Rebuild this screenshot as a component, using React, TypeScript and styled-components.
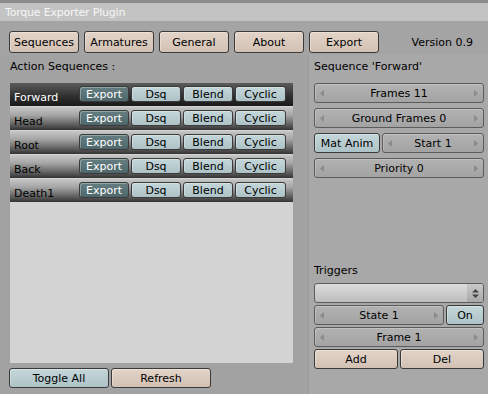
import React from "react";
import styled, { createGlobalStyle, css } from "styled-components";

type Tone = "beige" | "blue" | "teal";

interface ButtonInterface {
  $tone: Tone;
  $w?: number;
  $grow?: boolean;
  $h?: number;
}

interface RowInterface {
  $selected?: boolean;
}

const GlobalStyle = createGlobalStyle`
  html, body {
    margin: 0;
    padding: 0;
    background: #a4a4a4;
  }
  body {
    font-family: "DejaVu Sans", "Bitstream Vera Sans", sans-serif;
    font-size: 11px;
    color: #000;
  }
`;

const tones = {
  beige: css`
    background: linear-gradient(#e3d4c8, #d2c1b3);
    color: #000;
  `,
  blue: css`
    background: linear-gradient(#c4d6da, #aec3c7);
    color: #000;
  `,
  teal: css`
    background: linear-gradient(#647e82, #4f676b);
    color: #fff;
  `,
};

const ButtonStyled = styled.div<ButtonInterface>`
  box-sizing: border-box;
  width: ${({ $w }) => ($w ? `${$w}px` : "auto")};
  flex: ${({ $grow }) => ($grow ? "1 1 0" : "0 0 auto")};
  height: ${({ $h }) => $h ?? 20}px;
  display: flex;
  align-items: center;
  justify-content: center;
  border: 1px solid #3a3a3a;
  border-radius: 3px;
  box-shadow: inset 1px 1px 0 rgba(255, 255, 255, 0.3);
  white-space: nowrap;
  ${({ $tone }) => tones[$tone]}
`;

const AppStyled = styled.div`
  width: 488px;
  height: 394px;
  display: flex;
  flex-direction: column;
  background: #a4a4a4;
  overflow: hidden;
`;

const TitleBar = styled.div`
  height: 19px;
  border-top: 3px solid #8b8b8b;
  background: #c3c3c3;
  color: #f6f6f6;
  padding-left: 5px;
  display: flex;
  align-items: center;
  letter-spacing: -0.2px;
`;

const Toolbar = styled.div`
  display: flex;
  align-items: center;
  gap: 5px;
  padding: 10px 15px 0 9px;
`;

const Version = styled.span`
  margin-left: auto;
`;

const Columns = styled.div`
  flex: 1;
  display: flex;
  margin-top: 2px;
`;

const LeftColumn = styled.div`
  width: 308px;
  display: flex;
  flex-direction: column;
  padding: 4px 0 6px 10px;
  box-sizing: border-box;
  background: #a2a2a2;
`;

const RightColumn = styled.div`
  flex: 1;
  display: flex;
  flex-direction: column;
  padding: 4px 4px 25px 6px;
  background: #a8a8a8;
  box-shadow: inset 1px 0 0 #9a9a9a;
`;

const Heading = styled.div`
  height: 16px;
  line-height: 16px;
  margin-bottom: 8px;
`;

const List = styled.div`
  width: 283px;
  height: 280px;
  background: #d3d3d3;
  display: flex;
  flex-direction: column;
  gap: 1px;
`;

const RowStyled = styled.div<RowInterface>`
  height: 23px;
  display: flex;
  align-items: flex-start;
  background: ${({ $selected }) =>
    $selected
      ? "linear-gradient(#5c5c5c, #2e2e2e 60%, #1a1a1a)"
      : "linear-gradient(#c6c6c6, #a6a6a6 35%, #6a6a6a 70%, #333 100%)"};
  color: ${({ $selected }) => ($selected ? "#fff" : "#000")};
`;

const RowLabel = styled.div`
  box-sizing: border-box;
  width: 69px;
  padding: 8px 0 0 4px;
  line-height: 14px;
`;

const RowButtons = styled.div`
  display: flex;
  gap: 2px;
  margin-top: 3px;
`;

const BottomBar = styled.div`
  display: flex;
  gap: 2px;
  margin: 5px 0 0 -1px;
`;

const Stack = styled.div<{ $gap: number }>`
  display: flex;
  flex-direction: column;
  gap: ${({ $gap }) => $gap}px;
`;

const Line = styled.div`
  display: flex;
  gap: 2px;
`;

const Spacer = styled.div`
  flex: 1;
`;

const TriggerHeading = styled(Heading)`
  margin-bottom: 4px;
`;

const NumFieldStyled = styled.div`
  flex: 1 1 0;
  box-sizing: border-box;
  height: 20px;
  display: flex;
  align-items: center;
  padding: 0 5px;
  border: 1px solid #5c5c5c;
  border-radius: 3px;
  background: linear-gradient(#b2b2b2, #a3a3a3);
  box-shadow: inset 1px 1px 0 rgba(255, 255, 255, 0.2);
`;

const NumText = styled.span`
  flex: 1;
  text-align: center;
`;

const Dropdown = styled.div`
  box-sizing: border-box;
  height: 20px;
  display: flex;
  border: 1px solid #5c5c5c;
  border-radius: 3px;
  background: linear-gradient(#dcdcdc, #bdbdbd);
  overflow: hidden;
`;

const DropdownArrow = styled.div`
  margin-left: auto;
  width: 16px;
  display: flex;
  align-items: center;
  justify-content: center;
  background: linear-gradient(#c8c8c8, #a9a9a9);
`;

const Arrow = ({ dir }: { dir: "l" | "r" }) => (
  <svg width="4" height="7" viewBox="0 0 4 7">
    <path d={dir === "l" ? "M4 0 L0 3.5 L4 7 Z" : "M0 0 L4 3.5 L0 7 Z"} fill="#8a8a8a" />
  </svg>
);

const NumField = ({ children }: { children: React.ReactNode }) => (
  <NumFieldStyled>
    <Arrow dir="l" />
    <NumText>{children}</NumText>
    <Arrow dir="r" />
  </NumFieldStyled>
);

const sequences = ["Forward", "Head", "Root", "Back", "Death1"];
const tabs = ["Sequences", "Armatures", "General", "About", "Export"];

const App = () => {
  return (
    <AppStyled>
      <GlobalStyle />
      <TitleBar>Torque Exporter Plugin</TitleBar>
      <Toolbar>
        {tabs.map((t) => (
          <ButtonStyled key={t} $tone="beige" $w={70} $h={22}>
            {t}
          </ButtonStyled>
        ))}
        <Version>Version 0.9</Version>
      </Toolbar>
      <Columns>
        <LeftColumn>
          <Heading>Action Sequences :</Heading>
          <List>
            {sequences.map((name, i) => (
              <RowStyled key={name} $selected={i === 0}>
                <RowLabel>{name}</RowLabel>
                <RowButtons>
                  <ButtonStyled $tone="teal" $w={50} $h={16}>
                    Export
                  </ButtonStyled>
                  <ButtonStyled $tone="blue" $w={50} $h={16}>
                    Dsq
                  </ButtonStyled>
                  <ButtonStyled $tone="blue" $w={50} $h={16}>
                    Blend
                  </ButtonStyled>
                  <ButtonStyled $tone="blue" $w={51} $h={16}>
                    Cyclic
                  </ButtonStyled>
                </RowButtons>
              </RowStyled>
            ))}
          </List>
          <BottomBar>
            <ButtonStyled $tone="blue" $w={100}>
              Toggle All
            </ButtonStyled>
            <ButtonStyled $tone="beige" $w={100}>
              Refresh
            </ButtonStyled>
          </BottomBar>
        </LeftColumn>
        <RightColumn>
          <Heading>Sequence 'Forward'</Heading>
          <Stack $gap={5}>
            <Line>
              <NumField>Frames 11</NumField>
            </Line>
            <Line>
              <NumField>Ground Frames 0</NumField>
            </Line>
            <Line>
              <ButtonStyled $tone="blue" $w={66}>
                Mat Anim
              </ButtonStyled>
              <NumField>Start 1</NumField>
            </Line>
            <Line>
              <NumField>Priority 0</NumField>
            </Line>
          </Stack>
          <Spacer />
          <TriggerHeading>Triggers</TriggerHeading>
          <Stack $gap={2}>
            <Dropdown>
              <DropdownArrow>
                <svg width="7" height="9" viewBox="0 0 7 9">
                  <path d="M3.5 0 L7 3.5 H0 Z M3.5 9 L0 5.5 H7 Z" fill="#444" />
                </svg>
              </DropdownArrow>
            </Dropdown>
            <Line>
              <NumField>State 1</NumField>
              <ButtonStyled $tone="blue" $w={38}>
                On
              </ButtonStyled>
            </Line>
            <Line>
              <NumField>Frame 1</NumField>
            </Line>
            <Line>
              <ButtonStyled $tone="beige" $grow>
                Add
              </ButtonStyled>
              <ButtonStyled $tone="beige" $grow>
                Del
              </ButtonStyled>
            </Line>
          </Stack>
        </RightColumn>
      </Columns>
    </AppStyled>
  );
};

export default App;
